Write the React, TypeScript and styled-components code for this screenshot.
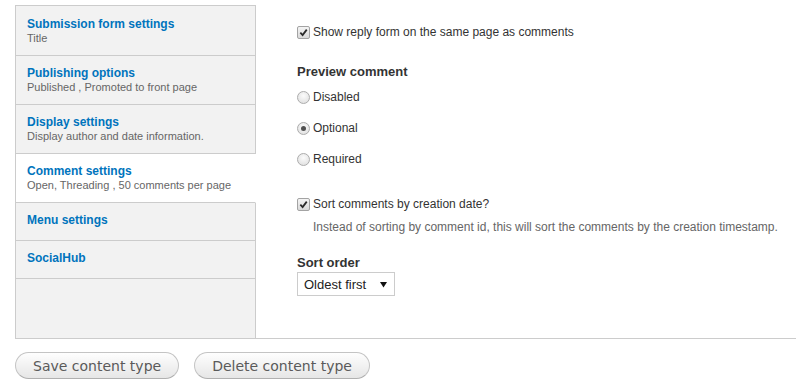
import React, { FC } from "react";
import styled, { createGlobalStyle } from "styled-components";

const Color = {
  Border: "#cccccc",
  NavBg: "#f2f2f2",
  Link: "#0074bd",
  Text: "#333333",
  Muted: "#666666",
};

const GlobalStyle = createGlobalStyle`
  html, body {
    margin: 0;
    padding: 0;
    background: #ffffff;
  }
  body {
    font-family: "Liberation Sans", Arial, sans-serif;
    font-size: 12px;
    color: ${Color.Text};
  }
`;

const Page = styled.div`
  padding: 5px 0 0 15px;
`;

const Tabs = styled.div`
  display: flex;
  border-bottom: 1px solid ${Color.Border};
`;

const TabList = styled.ul`
  display: flex;
  flex-direction: column;
  width: 241px;
  flex-shrink: 0;
  margin: 0;
  padding: 0;
  list-style: none;
  box-sizing: border-box;
  border-left: 1px solid ${Color.Border};
  border-top: 1px solid ${Color.Border};
  background: ${Color.NavBg};
`;

const TabItem = styled.li<{ $active?: boolean }>`
  padding: 8px 12px 11px 11px;
  border-bottom: 1px solid ${Color.Border};
  border-right: 1px solid ${({ $active }) => ($active ? "#ffffff" : Color.Border)};
  background: ${({ $active }) => ($active ? "#ffffff" : "transparent")};

  &:first-child {
    padding-top: 9px;
  }
`;

const TabFiller = styled.li`
  flex: 1;
  border-right: 1px solid ${Color.Border};
`;

const TabTitle = styled.div`
  font-weight: bold;
  color: ${Color.Link};
  line-height: 18px;
`;

const TabSummary = styled.div`
  font-size: 11px;
  line-height: 11px;
  color: ${Color.Muted};
`;

const Pane = styled.div`
  flex: 1;
  display: flex;
  flex-direction: column;
  align-items: flex-start;
  padding: 18px 0 42px 41px;
`;

const Option = styled.label<{ $gap?: number }>`
  display: flex;
  align-items: center;
  gap: 3px;
  height: 18px;
  margin-top: ${({ $gap }) => $gap ?? 0}px;
  line-height: 18px;
`;

const Heading = styled.div<{ $gap?: number }>`
  font-size: 13px;
  font-weight: bold;
  line-height: 18px;
  margin-top: ${({ $gap }) => $gap ?? 0}px;
`;

const Description = styled.div`
  font-size: 12px;
  line-height: 16px;
  color: ${Color.Muted};
  margin: 6px 0 0 16px;
`;

const Box = styled.span`
  display: inline-flex;
  align-items: center;
  justify-content: center;
  width: 13px;
  height: 13px;
  box-sizing: border-box;
  border: 1px solid #a3a3a3;
  border-radius: 2px;
  background: linear-gradient(#f4f4f4, #d9d9d9);

  svg {
    width: 9px;
    height: 9px;
  }
`;

const Radio = styled.span<{ $checked?: boolean }>`
  display: inline-flex;
  align-items: center;
  justify-content: center;
  width: 13px;
  height: 13px;
  box-sizing: border-box;
  border: 1px solid #acacac;
  border-radius: 50%;
  background: radial-gradient(circle at 50% 35%, #fbfbfb, #dcdcdc);

  &::after {
    content: "";
    display: ${({ $checked }) => ($checked ? "block" : "none")};
    width: 5px;
    height: 5px;
    border-radius: 50%;
    background: #505050;
  }
`;

const Select = styled.div`
  display: flex;
  align-items: center;
  justify-content: space-between;
  width: 98px;
  height: 24px;
  box-sizing: border-box;
  padding: 0 7px 0 6px;
  border: 1px solid ${Color.Border};
  background: #ffffff;
  font-size: 13px;
  color: #222;
`;

const Actions = styled.div`
  display: flex;
  gap: 15px;
  margin-top: 13px;
`;

const Button = styled.button`
  height: 27px;
  padding: 0 17px;
  border: 1px solid #c4c4c4;
  border-bottom-color: #b0b0b0;
  border-radius: 14px;
  background: linear-gradient(#fefefe, #e6e6e6);
  font-family: "DejaVu Sans", Verdana, sans-serif;
  font-size: 14px;
  color: #5a5a5a;
  cursor: pointer;
`;

const CheckIcon: FC = () => (
  <svg viewBox="0 0 10 10">
    <path d="M1.5 5.2 L4 7.8 L8.6 1.8" fill="none" stroke="#2a2a2a" strokeWidth="2" />
  </svg>
);

const Checkbox: FC<{ children: React.ReactNode; gap?: number }> = ({ children, gap }) => (
  <Option $gap={gap}>
    <Box>
      <CheckIcon />
    </Box>
    {children}
  </Option>
);

const tabs = [
  { title: "Submission form settings", summary: "Title" },
  { title: "Publishing options", summary: "Published , Promoted to front page" },
  { title: "Display settings", summary: "Display author and date information." },
  { title: "Comment settings", summary: "Open, Threading , 50 comments per page", active: true },
  { title: "Menu settings" },
  { title: "SocialHub" },
];

const previewOptions = [
  { label: "Disabled", gap: 7 },
  { label: "Optional", gap: 13, checked: true },
  { label: "Required", gap: 13 },
];

const App: FC = () => (
  <Page>
    <GlobalStyle />
    <Tabs>
      <TabList>
        {tabs.map((tab) => (
          <TabItem key={tab.title} $active={tab.active}>
            <TabTitle>{tab.title}</TabTitle>
            {tab.summary && <TabSummary>{tab.summary}</TabSummary>}
          </TabItem>
        ))}
        <TabFiller />
      </TabList>
      <Pane>
        <Checkbox>Show reply form on the same page as comments</Checkbox>
        <Heading $gap={22}>Preview comment</Heading>
        {previewOptions.map((opt) => (
          <Option key={opt.label} $gap={opt.gap}>
            <Radio $checked={opt.checked} />
            {opt.label}
          </Option>
        ))}
        <Checkbox gap={27}>Sort comments by creation date?</Checkbox>
        <Description>
          Instead of sorting by comment id, this will sort the comments by the creation timestamp.
        </Description>
        <Heading $gap={19}>Sort order</Heading>
        <Select>
          Oldest first
          <svg width="7" height="7" viewBox="0 0 7 7">
            <path d="M0 1 H7 L3.5 6.5 Z" fill="#111" />
          </svg>
        </Select>
      </Pane>
    </Tabs>
    <Actions>
      <Button>Save content type</Button>
      <Button>Delete content type</Button>
    </Actions>
  </Page>
);

export default App;
